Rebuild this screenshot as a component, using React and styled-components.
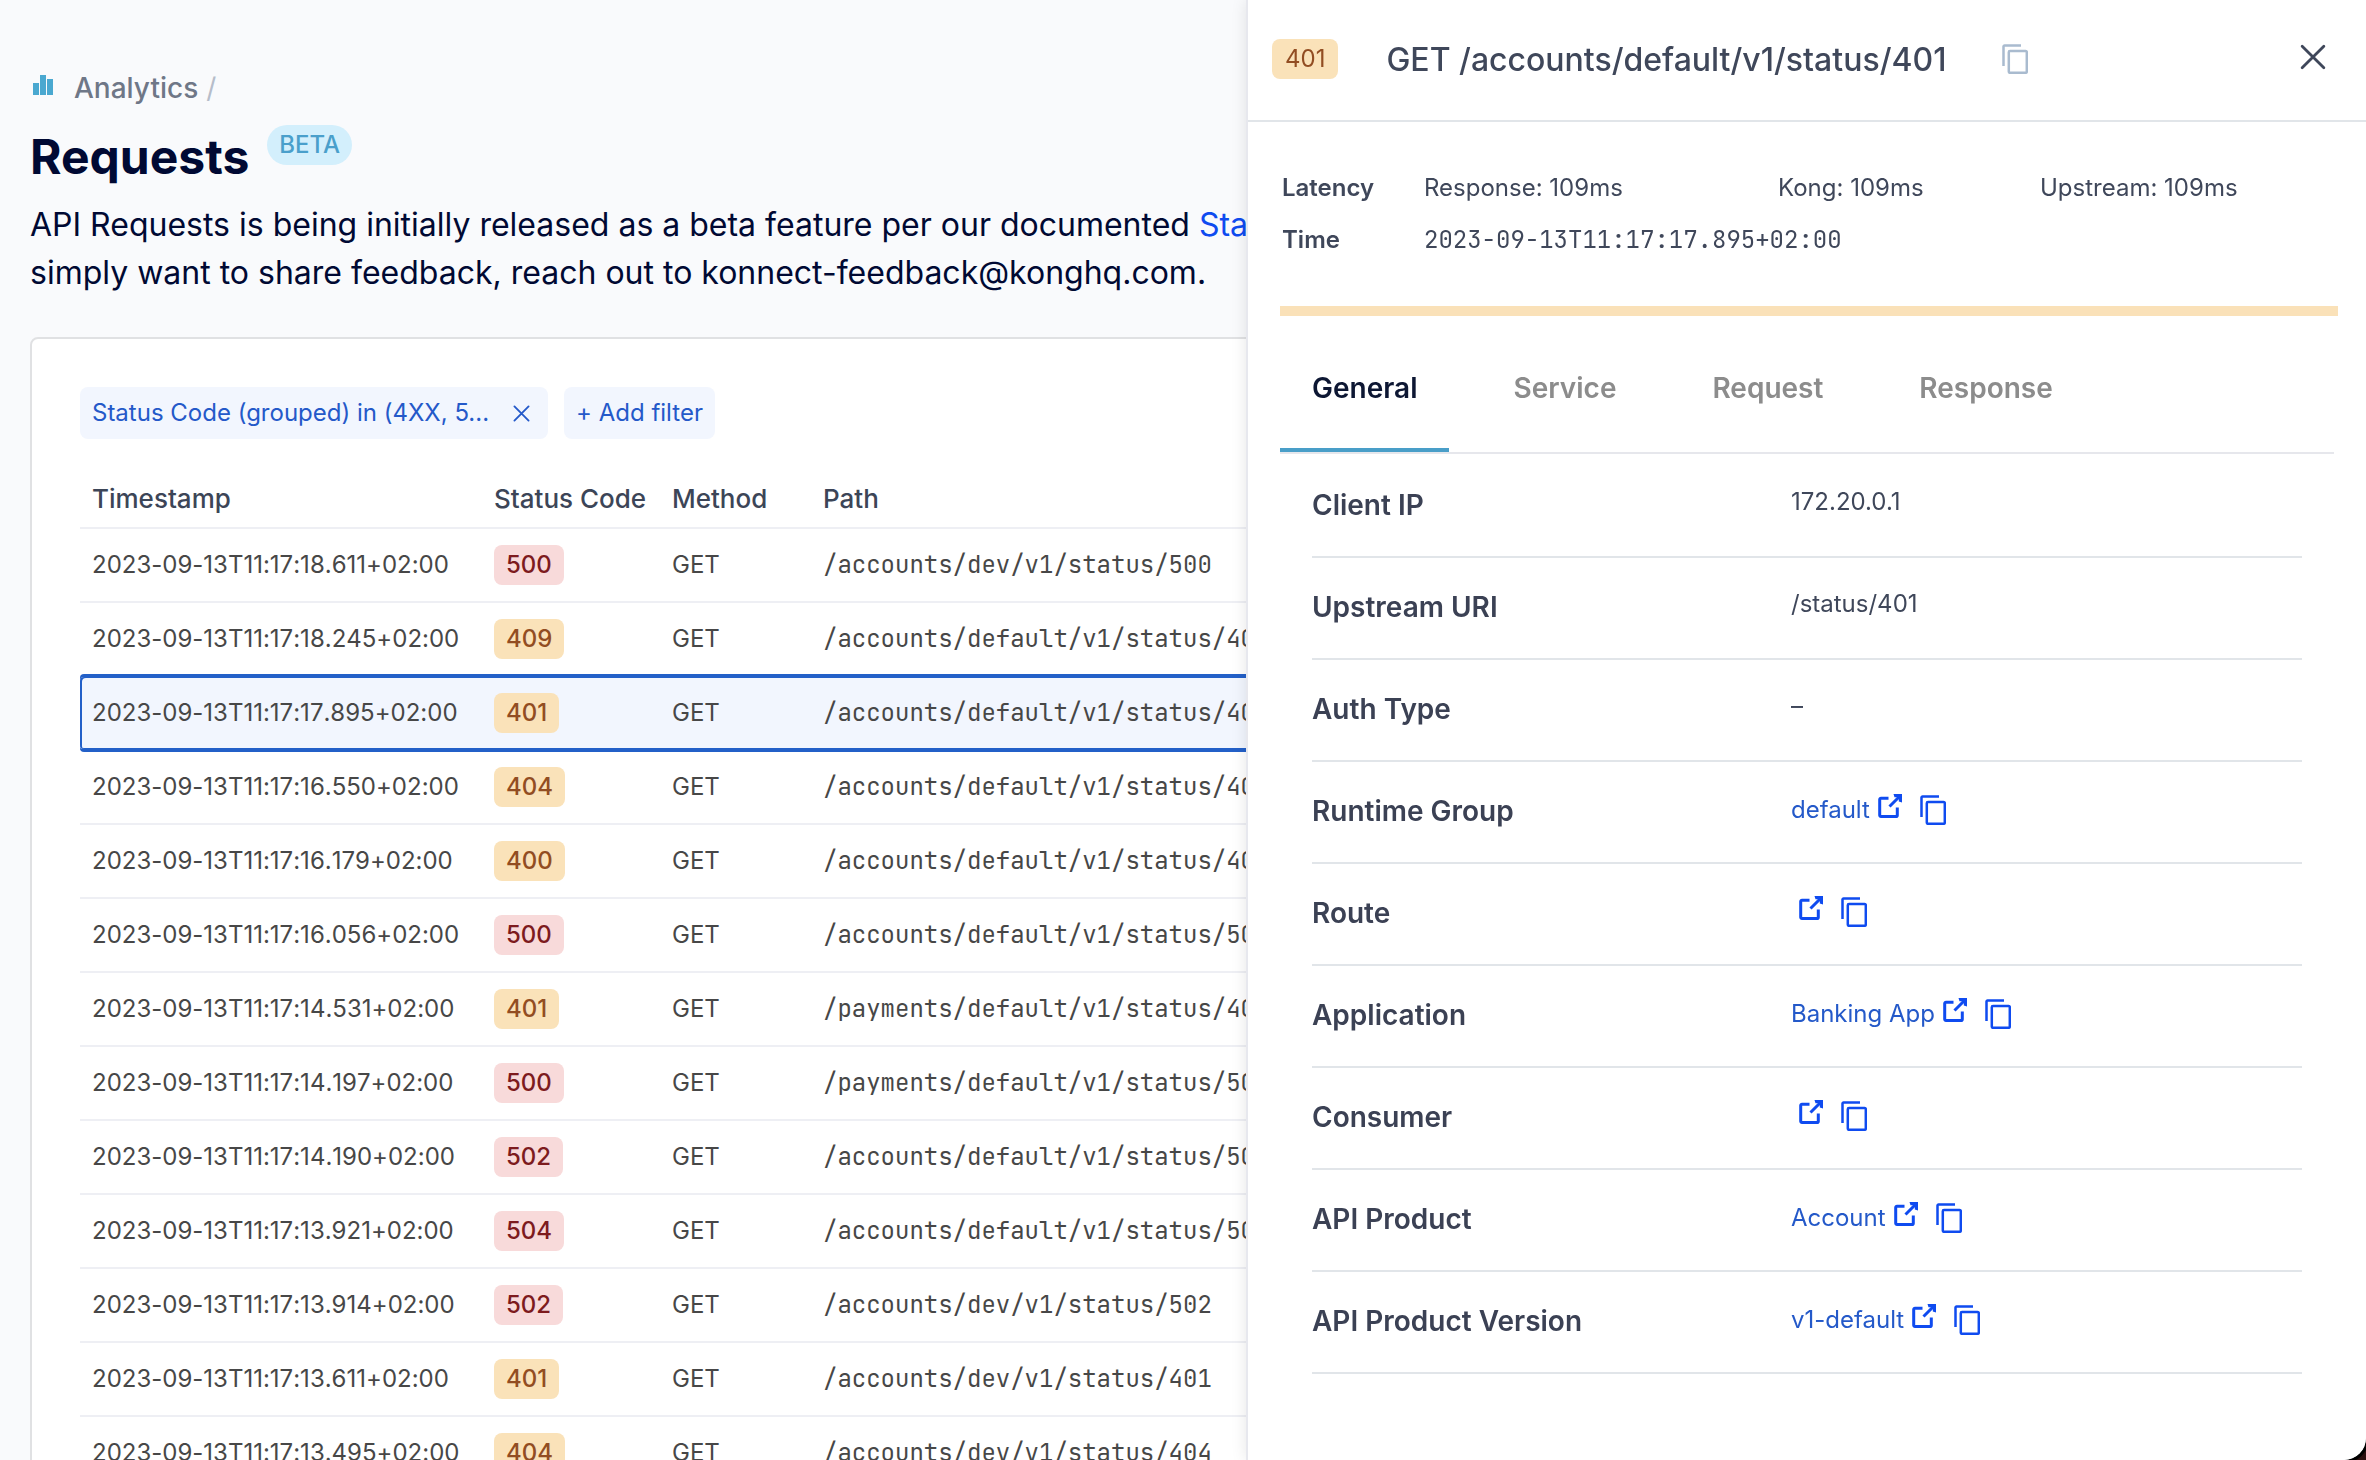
import React from 'react';
import styled, { createGlobalStyle, css } from 'styled-components';

const GlobalStyle = createGlobalStyle`
  *, *::before, *::after { box-sizing: border-box; }
  html { background: #2b0f0f; }
  body {
    margin: 0;
    font-family: Inter, "Liberation Sans", sans-serif;
    font-feature-settings: "calt" 0;
    font-size: 24px;
    color: #474747;
  }
  button, h1, h2, p, dl, dd, dt { margin: 0; font: inherit; }
  button { border: 0; padding: 0; background: none; color: inherit; cursor: pointer; }
  a { color: inherit; text-decoration: none; }
`;

const mono = css`
  font-family: "JetBrains Mono", "DejaVu Sans Mono", "Liberation Mono", monospace;
`;

const Shell = styled.div`
  height: 100vh;
  overflow: hidden;
  background: #f9fafc;
  border-bottom-right-radius: 22px;
  box-shadow: 0 0 0 3px #000;
`;

const Page = styled.main`
  padding: 68px 30px 0;
`;

const Breadcrumb = styled.nav`
  display: flex;
  align-items: center;
  gap: 8px;
  height: 40px;
  font-size: 28px;
  line-height: 40px;
  font-weight: 500;
  color: #6f7787;

  svg { margin: 0 12px 6px 2px; }
`;

const Slash = styled.span`
  font-weight: 400;
  color: #b6bdca;
`;

const TitleRow = styled.div`
  display: flex;
  align-items: flex-start;
  gap: 18px;
  margin-top: 17px;
`;

const Title = styled.h1`
  font-size: 48px;
  line-height: 64px;
  font-weight: 700;
  color: #000933;
`;

const BetaTag = styled.span`
  height: 40px;
  padding: 0 12px;
  border-radius: 20px;
  background: #d3effc;
  color: #4a9fcb;
  font-weight: 500;
  line-height: 40px;
`;

const Intro = styled.p`
  margin-top: 12px;
  font-size: 32px;
  line-height: 48px;
  color: #000933;
  white-space: nowrap;

  a { color: #0f4bf0; }
`;

const Card = styled.section`
  margin-top: 40px;
  padding: 48px;
  background: #fff;
  border: 2px solid #e0e1e3;
  border-radius: 8px;
`;

const Filters = styled.div`
  display: flex;
  gap: 16px;
`;

const Chip = styled.div`
  display: flex;
  align-items: center;
  gap: 24px;
  height: 52px;
  padding: 0 ${(p) => (p.$removable ? 18 : 12)}px 0 12px;
  border-radius: 8px;
  background: #f2f6fe;
  color: #2459c9;
  line-height: 32px;

  button { display: flex; }
`;

const Table = styled.table`
  width: 100%;
  margin-top: 22px;
  border-collapse: separate;
  border-spacing: 0;
  table-layout: fixed;
  text-align: left;
`;

const HeadCell = styled.th`
  width: ${(p) => p.$width || 'auto'};
  height: 68px;
  padding: 8px 12px 0;
  border-bottom: 2px solid #eeeff4;
  font-size: 26px;
  font-weight: 500;
  color: #3c4557;
  white-space: nowrap;
`;

const Row = styled.tr`
  td {
    height: 74px;
    padding: 0 12px;
    border-bottom: 2px solid #eeeff4;
    line-height: 32px;
    white-space: nowrap;
  }

  ${(p) =>
    p.$selected &&
    css`
      td {
        background: #f2f6fe;
        border-bottom-color: #2360c8;
        box-shadow: inset 0 1px #2360c8, inset 0 -1px #2360c8, 0 -3px #2360c8, 0 1px #2360c8;
      }
      td:first-child {
        border-radius: 4px 0 0 4px;
        box-shadow: inset 2px 1px #2360c8, inset 0 -1px #2360c8, 0 -3px #2360c8, 0 1px #2360c8;
      }
    `}
`;

const TimeCell = styled.td`
  font-kerning: none;
`;

const PathCell = styled.td`
  ${mono}
`;

const Status = styled.span`
  display: inline-block;
  height: 40px;
  padding: 0 ${(p) => (p.$light ? 13 : 12)}px;
  border-radius: 8px;
  line-height: 40px;
  font-weight: ${(p) => (p.$light ? 400 : 500)};
  background: ${(p) => (p.$code >= 500 ? '#f8dada' : '#fae2b9')};
  color: ${(p) => (p.$code >= 500 ? '#7d1b1e' : '#924d22')};
`;

const Drawer = styled.aside`
  position: fixed;
  inset: 0 0 0 auto;
  width: min(1120px, 100%);
  background: #fff;
  border-left: 2px solid #e7e8ee;
  border-bottom-right-radius: 22px;
  box-shadow: 0 0 16px rgba(0, 0, 0, 0.1);
  clip-path: inset(0 0 0 -32px round 0 0 22px 0);
  color: #3f475a;
`;

const DrawerHead = styled.header`
  display: flex;
  align-items: center;
  height: 122px;
  padding: 0 40px 2px 24px;
  border-bottom: 2px solid #e1e5e9;

  button { display: flex; }
  button:last-child { margin: 0 0 4px auto; }
`;

const DrawerTitle = styled.h2`
  margin: 0 56px 0 48px;
  padding-top: 2px;
  font-size: 32px;
  line-height: 48px;
  font-weight: 500;
`;

const DrawerBody = styled.div`
  padding: 40px 28px 0 32px;
`;

const Summary = styled.dl`
  display: grid;
  grid-template-columns: 142px 354px 262px 1fr;
  padding-left: 2px;
  line-height: 52px;

  dt { font-weight: 600; }
`;

const TimeValue = styled.dd`
  grid-column: 2 / -1;
  ${mono}
`;

const StatusBar = styled.div`
  height: 10px;
  margin-top: 40px;
  background: #fae1b8;
`;

const Tabs = styled.div`
  display: flex;
  gap: 32px;
  margin-right: 4px;
  padding-top: 16px;
  border-bottom: 2px solid #e6e7ec;
`;

const Tab = styled.button.attrs({ type: 'button', role: 'tab' })`
  height: 120px;
  padding: 0 32px 4px;
  border-bottom: 4px solid ${(p) => (p['aria-selected'] ? '#499ec8' : 'transparent')};
  font-size: 28px;
  font-weight: 600;
  color: ${(p) => (p['aria-selected'] ? '#0d1733' : '#8c8c8c')};
`;

const Details = styled.dl`
  margin: 2px 36px 0 32px;
`;

const Detail = styled.div`
  display: grid;
  grid-template-columns: 479px 1fr;
  height: 102px;
  padding-top: 26px;
  border-bottom: 2px solid #e1e5e9;

  dt {
    padding-top: 3px;
    font-size: 28px;
    line-height: 40px;
    font-weight: 600;
    color: #3b4154;
  }
`;

const Value = styled.dd`
  display: flex;
  gap: 18px;
  padding-top: ${(p) => (p.$link ? 2 : 0)}px;
  line-height: 40px;
`;

const ExternalLink = styled.a`
  display: flex;
  gap: 8px;
  color: #2459c9;

  svg { margin-top: 4px; }
`;

const IconButton = styled.button.attrs({ type: 'button' })`
  align-self: flex-start;
  display: flex;
  margin-top: 5px;
`;

const BarsIcon = () => (
  <svg width="22" height="22" viewBox="0 0 22 22" fill="#4aa8d0" aria-hidden="true">
    <path d="M1 9h6v12H1zM8 1h6v20H8zM15 5h6v16h-6z" />
  </svg>
);

const CrossIcon = ({ size, width }) => (
  <svg width={size} height={size} viewBox="0 0 24 24" fill="none" stroke="currentColor" strokeWidth={width} strokeLinecap="round" aria-hidden="true">
    <path d="M2 2L22 22M22 2L2 22" />
  </svg>
);

const CopyIcon = ({ color = '#0f4bf0' }) => (
  <svg width="26" height="30" viewBox="0 0 26 30" fill="none" stroke={color} strokeWidth="2.5" aria-hidden="true">
    <path d="M1.5 22V2.5a1 1 0 0 1 1-1H19" />
    <rect x="6.8" y="7" width="18" height="21.8" rx="1.2" />
  </svg>
);

const ExternalIcon = () => (
  <svg width="24" height="24" viewBox="0 0 24 24" fill="none" stroke="#0f4bf0" strokeWidth="3" aria-hidden="true">
    <path d="M10.5 4.3H3a1.3 1.3 0 0 0-1.3 1.3v15.6a1.3 1.3 0 0 0 1.3 1.3h15a1.3 1.3 0 0 0 1.3-1.3V13.5" />
    <path d="M11.5 12.5L21 3" />
    <path d="M15.5 0H24v8.5l-3.2-1V3.2h-4.3z" fill="#0f4bf0" stroke="none" />
  </svg>
);

const requests = [
  ['18.611', 500, '/accounts/dev/v1/status/500'],
  ['18.245', 409, '/accounts/default/v1/status/409'],
  ['17.895', 401, '/accounts/default/v1/status/401'],
  ['16.550', 404, '/accounts/default/v1/status/404'],
  ['16.179', 400, '/accounts/default/v1/status/400'],
  ['16.056', 500, '/accounts/default/v1/status/500'],
  ['14.531', 401, '/payments/default/v1/status/401'],
  ['14.197', 500, '/payments/default/v1/status/500'],
  ['14.190', 502, '/accounts/default/v1/status/502'],
  ['13.921', 504, '/accounts/default/v1/status/504'],
  ['13.914', 502, '/accounts/dev/v1/status/502'],
  ['13.611', 401, '/accounts/dev/v1/status/401'],
  ['13.495', 404, '/accounts/dev/v1/status/404'],
];

const details = [
  { label: 'Client IP', value: '172.20.0.1' },
  { label: 'Upstream URI', value: '/status/401' },
  { label: 'Auth Type', value: '–' },
  { label: 'Runtime Group', value: 'default', link: true },
  { label: 'Route', value: '', link: true },
  { label: 'Application', value: 'Banking App', link: true },
  { label: 'Consumer', value: '', link: true },
  { label: 'API Product', value: 'Account', link: true },
  { label: 'API Product Version', value: 'v1-default', link: true },
];

const tabs = ['General', 'Service', 'Request', 'Response'];

export default function App() {
  const [tab, setTab] = React.useState('General');
  return (
    <>
      <GlobalStyle />
      <Shell>
        <Page>
          <Breadcrumb aria-label="Breadcrumb">
            <BarsIcon />
            <a href="#analytics">Analytics</a>
            <Slash>/</Slash>
          </Breadcrumb>
          <TitleRow>
            <Title>Requests</Title>
            <BetaTag>BETA</BetaTag>
          </TitleRow>
          <Intro>
            API Requests is being initially released as a beta feature per our documented{' '}
            <a href="#stages">Stag</a>
            <br />
            simply want to share feedback, reach out to konnect-feedback@konghq.com.
          </Intro>
          <Card>
            <Filters>
              <Chip $removable>
                <span>Status Code (grouped) in (4XX, 5...</span>
                <button type="button" aria-label="Remove filter">
                  <CrossIcon size={17} width={2.6} />
                </button>
              </Chip>
              <Chip as="button" type="button">+ Add filter</Chip>
            </Filters>
            <Table>
              <thead>
                <tr>
                  <HeadCell $width="402px">Timestamp</HeadCell>
                  <HeadCell $width="178px">Status Code</HeadCell>
                  <HeadCell $width="151px">Method</HeadCell>
                  <HeadCell>Path</HeadCell>
                </tr>
              </thead>
              <tbody>
                {requests.map(([time, code, path]) => (
                  <Row key={time} $selected={time === '17.895'}>
                    <TimeCell>{`2023-09-13T11:17:${time}+02:00`}</TimeCell>
                    <td><Status $code={code}>{code}</Status></td>
                    <td>GET</td>
                    <PathCell>{path}</PathCell>
                  </Row>
                ))}
              </tbody>
            </Table>
          </Card>
        </Page>
        <Drawer aria-label="Request details">
          <DrawerHead>
            <Status $code={401} $light>401</Status>
            <DrawerTitle>GET /accounts/default/v1/status/401</DrawerTitle>
            <button type="button" aria-label="Copy path"><CopyIcon color="#a9bbcf" /></button>
            <button type="button" aria-label="Close"><CrossIcon size={26} width={2.6} /></button>
          </DrawerHead>
          <DrawerBody>
            <Summary>
              <dt>Latency</dt>
              <dd>Response: 109ms</dd>
              <dd>Kong: 109ms</dd>
              <dd>Upstream: 109ms</dd>
              <dt>Time</dt>
              <TimeValue>2023-09-13T11:17:17.895+02:00</TimeValue>
            </Summary>
            <StatusBar />
            <Tabs role="tablist">
              {tabs.map((name) => (
                <Tab key={name} aria-selected={name === tab} onClick={() => setTab(name)}>{name}</Tab>
              ))}
            </Tabs>
            <Details>
              {details.map(({ label, value, link }) => (
                <Detail key={label}>
                  <dt>{label}</dt>
                  {link ? (
                    <Value $link>
                      <ExternalLink href="#open" aria-label={`Open ${label}`}>
                        <span>{value}</span>
                        <ExternalIcon />
                      </ExternalLink>
                      <IconButton aria-label={`Copy ${label}`}><CopyIcon /></IconButton>
                    </Value>
                  ) : (
                    <Value>{value}</Value>
                  )}
                </Detail>
              ))}
            </Details>
          </DrawerBody>
        </Drawer>
      </Shell>
    </>
  );
}
